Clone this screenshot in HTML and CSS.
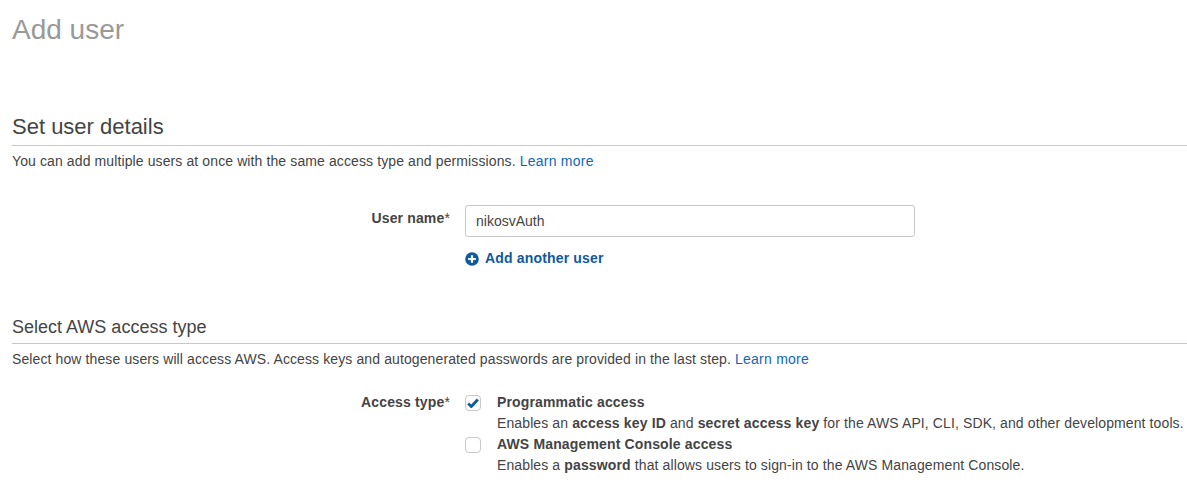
FILE: index.html
```html
<!DOCTYPE html>
<html lang="en">
<head>
<meta charset="utf-8">
<title>Add user</title>
<link rel="stylesheet" href="styles.css">
</head>
<body>
<h1 class="page-title">Add user</h1>
<section class="section section-details">
  <h2 class="section-title">Set user details</h2>
  <p class="section-desc">You can add multiple users at once with the same access type and permissions. <a class="link" href="#">Learn more</a></p>
  <div class="form-row row-name">
    <label class="field-label">User name<span class="req">*</span></label>
    <div class="field-body">
      <input class="text-input" type="text" value="nikosvAuth">
      <a class="add-user" href="#">
        <svg class="add-icon" viewBox="0 0 14 14" width="14" height="14" aria-hidden="true"><circle cx="7" cy="7" r="6.8" fill="#0f5a9c"/><path d="M7 3.2v7.6M3.2 7h7.6" stroke="#fff" stroke-width="2.2"/></svg>
        Add another user
      </a>
    </div>
  </div>
</section>
<section class="section section-access">
  <h2 class="section-title section-title-small">Select AWS access type</h2>
  <p class="section-desc">Select how these users will access AWS. Access keys and autogenerated passwords are provided in the last step. <a class="link" href="#">Learn more</a></p>
  <div class="form-row row-access">
    <div class="field-label">Access type<span class="req">*</span></div>
    <div class="field-body options">
      <div class="option">
        <span class="check">
          <svg viewBox="0 0 14 12" width="12" height="10" aria-hidden="true"><path d="M1.2 6.5 5 10.2l7.8-8.4" fill="none" stroke="#0f5a9c" stroke-width="3.4"/></svg>
        </span>
        <div class="option-text">
          <div class="option-title">Programmatic access</div>
          <div class="option-desc">Enables an <b>access key ID</b> and <b>secret access key</b> for the AWS API, CLI, SDK, and other development tools.</div>
        </div>
      </div>
      <div class="option">
        <span class="check"></span>
        <div class="option-text">
          <div class="option-title">AWS Management Console access</div>
          <div class="option-desc">Enables a <b>password</b> that allows users to sign-in to the AWS Management Console.</div>
        </div>
      </div>
    </div>
  </div>
</section>
</body>
</html>
```
FILE: styles.css
```css
* { box-sizing: border-box; }
html, body { margin: 0; padding: 0; }
body {
  width: 1187px;
  height: 494px;
  overflow: hidden;
  background: #fff;
  padding-left: 12px;
  font-family: "Liberation Sans", Arial, sans-serif;
  font-size: 14px;
  line-height: 21px;
  letter-spacing: .11px;
  color: #444;
}
.page-title {
  margin: 0;
  padding-top: 13px;
  font-size: 28px;
  line-height: 34px;
  font-weight: 400;
  letter-spacing: 0;
  color: #999;
}
.section-details { margin-top: 66px; }
.section-access { margin-top: 48px; }
.section-title {
  margin: 0;
  font-size: 22px;
  line-height: 28px;
  font-weight: 400;
  letter-spacing: 0;
  color: #444;
  border-bottom: 1px solid #c8c8c8;
  height: 33px;
}
.section-title-small { font-size: 18px; line-height: 20px; height: 27px; }
.section-desc { margin: 5px 0 0; }
.link { color: #1166bb; text-decoration: none; letter-spacing: .25px; }
.form-row { display: flex; }
.row-name { margin-top: 33px; }
.row-access { margin-top: 22px; }
.field-label {
  width: 438px;
  text-align: right;
  font-weight: 700;
  letter-spacing: .15px;
}
.req { font-weight: 400; }
.row-name .field-label { padding-top: 3px; }
.field-body { margin-left: 15px; }
.text-input {
  display: block;
  width: 450px;
  height: 32px;
  padding: 0 10px;
  border: 1px solid #c8c8c8;
  border-radius: 3px;
  font: 14px "Liberation Sans", Arial, sans-serif;
  letter-spacing: 0;
  color: #444;
  background: #fff;
}
.add-user {
  display: flex;
  align-items: center;
  gap: 6px;
  margin-top: 11px;
  font-weight: 700;
  letter-spacing: .17px;
  color: #0f5a9c;
  text-decoration: none;
}
.add-icon { flex: none; }
.option { display: flex; }
.check {
  flex: none;
  display: flex;
  align-items: center;
  justify-content: center;
  width: 16px;
  height: 16px;
  margin-top: 3px;
  border: 1px solid #c8c8c8;
  border-radius: 4px;
  background: #fff;
}
.option-text { margin-left: 16px; }
.option-title { font-weight: 700; letter-spacing: .15px; }
.option-desc b { letter-spacing: .15px; }
```
